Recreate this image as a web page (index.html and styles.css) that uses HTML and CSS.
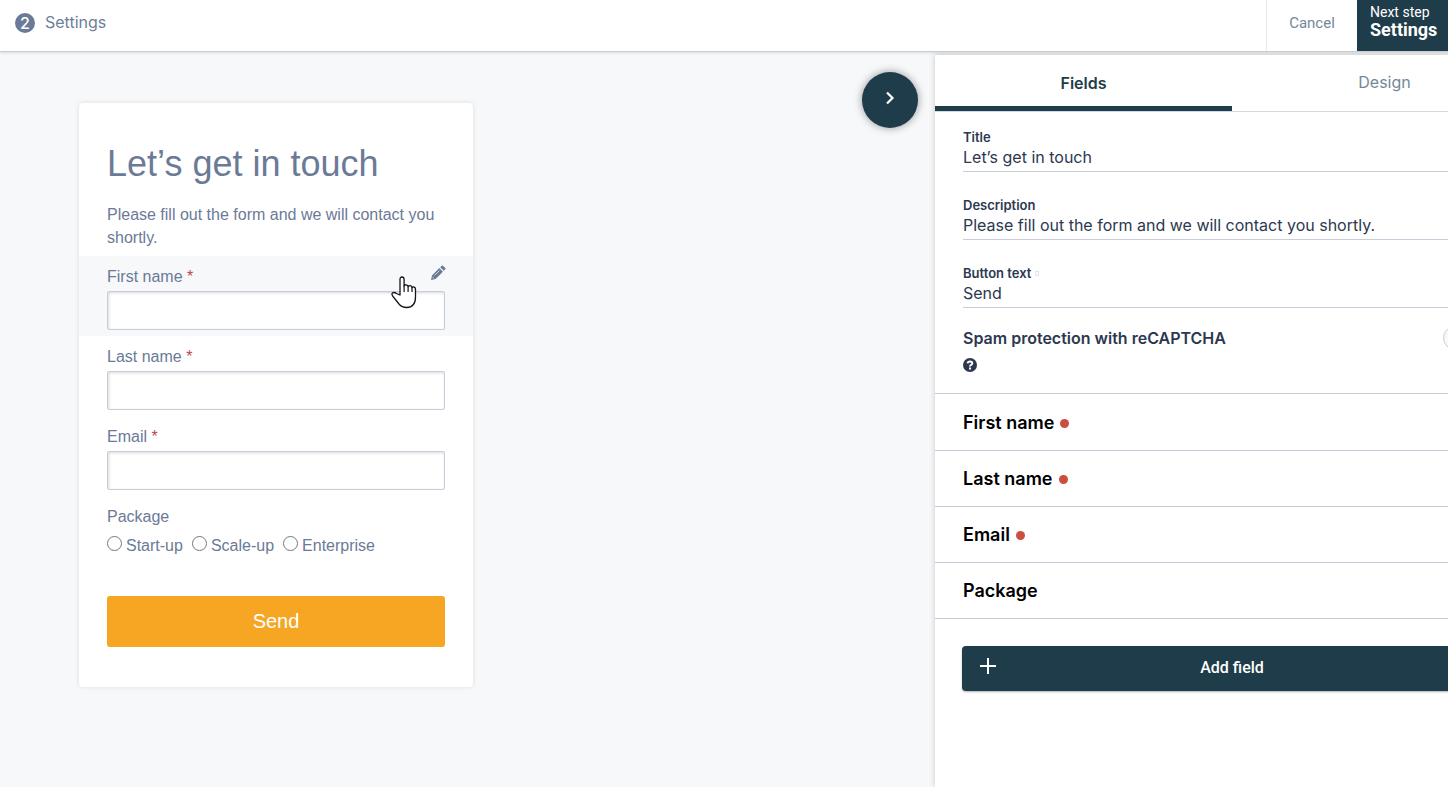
FILE: index.html
```
<!DOCTYPE html>
<html lang="en">
<head>
    <meta charset="UTF-8">
    <meta name="viewport" content="width=device-width, initial-scale=1.0">
    <title>Settings</title>
    <link rel="stylesheet" href="styles.css">
</head>
<body>
    <header class="topbar">
        <div class="step">
            <span class="step-number">2</span>
            <span class="step-name">Settings</span>
        </div>
        <button type="button" class="cancel">Cancel</button>
        <button type="button" class="next">
            <span>Next step</span>
            <strong>Settings</strong>
        </button>
    </header>

    <main class="editor">
        <!-- Form preview -->
        <section class="canvas">
            <form class="card">
                <h1>Let’s get in touch</h1>
                <p class="intro">Please fill out the form and we will contact you shortly.</p>
                <div class="field active">
                    <label for="first-name">First name <span class="star">*</span></label>
                    <input type="text" id="first-name">
                    <svg class="pencil" viewBox="0 0 16 16" width="16" height="16">
                        <path fill="#6b7a96" d="M1 15l1-4.600L9.300 3.100l3.600 3.600L5.600 14zM10.200 2.200l1.500-1.500q.6-.6 1.200 0l2.400 2.400q.6.600 0 1.200l-1.500 1.500z"/>
                        <path fill="none" stroke="#f7f8fa" stroke-width=".7" d="M4.500 10.500l5-5M2.600 12.100l1.300 1.300"/>
                    </svg>
                    <svg class="cursor" viewBox="0 0 26 33" width="26" height="33">
                        <path fill="#fff" stroke="#14141f" stroke-width="1.300" stroke-linejoin="round" d="M9 19V3.500Q9 1 11 1t2.100 2.500V10q.5-1.400 2-1.200 1.900.2 2 1.900.6-1.200 2-1 1.700.2 1.900 2 .6-1 1.900-.7 1.600.3 1.600 2.300V21q0 10.500-9 10.500-4.500 0-7.500-3.500l-6-7.500Q.2 18 1.500 16.900q1.700-1 4 .6z"/>
                        <path fill="none" stroke="#14141f" stroke-width="1.200" d="M13.100 9.500V16M17.100 10.500V16M21 11.500V16"/>
                    </svg>
                </div>
                <div class="field">
                    <label for="last-name">Last name <span class="star">*</span></label>
                    <input type="text" id="last-name">
                </div>
                <div class="field">
                    <label for="email">Email <span class="star">*</span></label>
                    <input type="email" id="email">
                </div>
                <fieldset class="package">
                    <legend>Package</legend>
                    <div class="options">
                        <label><input type="radio" name="package">Start-up</label>
                        <label><input type="radio" name="package">Scale-up</label>
                        <label><input type="radio" name="package">Enterprise</label>
                    </div>
                </fieldset>
                <button type="button" class="send">Send</button>
            </form>
            <button type="button" class="collapse" aria-label="Collapse panel">
                <svg viewBox="0 0 12 16" width="12" height="16">
                    <path fill="none" stroke="#fff" stroke-width="2.200" d="M3 2.500L8.500 8 3 13.500"/>
                </svg>
            </button>
        </section>

        <!-- Side panel, runs past the right edge of the window -->
        <aside class="panel">
            <nav class="tabs">
                <button type="button" class="tab current">Fields</button>
                <button type="button" class="tab">Design</button>
            </nav>
            <div class="settings">
                <div class="setting">
                    <label for="title">Title</label>
                    <input type="text" id="title" value="Let’s get in touch">
                </div>
                <div class="setting">
                    <label for="description">Description</label>
                    <input type="text" id="description" value="Please fill out the form and we will contact you shortly.">
                </div>
                <div class="setting">
                    <label for="button-text">Button text <span class="mark"></span></label>
                    <input type="text" id="button-text" value="Send">
                </div>
                <div class="spam">
                    <label for="captcha">Spam protection with reCAPTCHA</label>
                    <input type="checkbox" id="captcha" class="switch">
                </div>
                <svg class="help" viewBox="0 0 14 14" width="14" height="14">
                    <circle cx="7" cy="7" r="7" fill="#2c3850"/>
                    <path fill="none" stroke="#fff" stroke-width="1.900" d="M4.600 5.400Q4.800 3.500 7 3.500q2.300 0 2.300 1.700 0 1-1.200 1.600Q7 7.300 7 8.500"/>
                    <path fill="#fff" d="M6 9.400h2v2H6z"/>
                </svg>
            </div>
            <ul class="field-list">
                <li><button type="button">First name<span class="dot"></span></button></li>
                <li><button type="button">Last name<span class="dot"></span></button></li>
                <li><button type="button">Email<span class="dot"></span></button></li>
                <li><button type="button">Package</button></li>
            </ul>
            <button type="button" class="add">
                <svg viewBox="0 0 18 18" width="18" height="18">
                    <path fill="none" stroke="#fff" stroke-width="2" d="M9 1v16M1 9h16"/>
                </svg>
                <span>Add field</span>
            </button>
        </aside>
    </main>
</body>
</html>
```
FILE: styles.css
```
* {
    margin: 0;
    padding: 0;
    box-sizing: border-box;
}

body {
    display: flex;
    flex-direction: column;
    height: 100vh;
    overflow: hidden;
    color: #2c3850;
    font: 16px/24px Inter, sans-serif;
    background: #f7f8fa;
}

button {
    border: none;
    background: none;
    font: inherit;
    color: inherit;
    cursor: pointer;
}

/* Top bar */
.topbar {
    position: relative;
    z-index: 2;
    display: flex;
    flex: none;
    height: 52px;
    border-bottom: 1px solid #c8cdd3;
    background: #fff;
    box-shadow: 0 1px 3px rgba(0, 0, 0, 0.12);
}

.step {
    display: flex;
    flex: 1;
    align-items: center;
    gap: 10px;
    padding: 0 0 6px 15px;
    color: #6f8097;
}

.step-number {
    width: 20px;
    height: 20px;
    border-radius: 50%;
    background: #6b7a96;
    color: #fff;
    font-weight: 500;
    line-height: 20px;
    text-align: center;
}

.step-name {
    padding-bottom: 2px;
}

.cancel {
    width: 91px;
    padding-bottom: 6px;
    border-left: 1px solid #e4e7ee;
    color: #75869a;
    font-family: Roboto, sans-serif;
    font-size: 15px;
}

.next {
    display: flex;
    flex-direction: column;
    justify-content: center;
    width: 91px;
    padding: 0 0 10px 13px;
    background: #1e3c49;
    color: #fff;
    font: 14px/18px Roboto, sans-serif;
    text-align: left;
}

.next strong {
    font-size: 18px;
}

/* Layout */
.editor {
    display: flex;
    flex: 1;
    min-height: 0;
    overflow: hidden;
}

.canvas {
    display: flex;
    flex: 1;
    align-items: flex-start;
    justify-content: space-between;
    padding: 20px 17px 0 79px;
}

.collapse {
    display: flex;
    align-items: center;
    justify-content: center;
    width: 56px;
    height: 56px;
    padding-bottom: 4px;
    border-radius: 50%;
    background: #1e3c49;
    box-shadow: 0 0 8px rgba(0, 0, 0, 0.4);
}

/* Form preview */
.card {
    width: 394px;
    margin-top: 31px;
    padding: 40px 0;
    border-radius: 4px;
    background: #fff;
    box-shadow: 0 0 5px rgba(0, 0, 0, 0.1);
    color: #6b7a96;
    font: 16px/23px "Liberation Sans", Arial, sans-serif;
}

.card h1 {
    padding: 0 28px;
    font-size: 36px;
    font-weight: normal;
    line-height: 42px;
}

.intro {
    padding: 18px 28px 7px;
}

.field {
    position: relative;
    height: 80px;
    padding: 9px 28px 0;
}

.field.active {
    background: #f7f8fa;
}

.field label {
    display: block;
    margin-bottom: 3px;
}

.star {
    color: #b94a48;
}

.field input {
    display: block;
    width: 100%;
    height: 39px;
    padding: 0 8px;
    border: 1px solid #c8cddb;
    border-radius: 2px;
    background: #fff;
    box-shadow: inset 1px 1px 3px rgba(0, 0, 0, 0.15);
    font: inherit;
}

.pencil {
    position: absolute;
    top: 9px;
    right: 27px;
}

.cursor {
    position: absolute;
    top: 20px;
    right: 56px;
}

.package {
    padding: 0 28px;
    border: none;
}

.package legend {
    padding-top: 9px;
}

.options {
    display: flex;
    gap: 9px;
    padding-top: 6px;
}

.options label {
    display: flex;
    align-items: flex-start;
    gap: 4px;
}

.options input {
    width: 15px;
    height: 15px;
    margin-top: 2px;
}

.send {
    display: block;
    width: calc(100% - 56px);
    height: 51px;
    margin: 39px 28px 0;
    border-radius: 3px;
    background: #f6a623;
    color: #fff;
    font-size: 20px;
}

/* Side panel */
.panel {
    flex: none;
    width: 594px;
    margin: 3px -81px 0 0;
    background: #fff;
    box-shadow: 0 0 6px rgba(0, 0, 0, 0.2);
}

.tabs {
    display: flex;
    height: 57px;
    border-bottom: 1px solid #d5d8de;
}

.tab {
    width: 50%;
    padding: 0 0 2px 8px;
    color: #75869a;
}

.tab.current {
    padding: 4px 0 0;
    border-bottom: 5px solid #1e3c49;
    color: #1e3c49;
    font-weight: 600;
}

.settings {
    padding: 16px 28px 21px;
    border-bottom: 1px solid #c8cddb;
}

.setting {
    margin-bottom: 24px;
}

.setting label {
    display: block;
    font-size: 13px;
    font-weight: 600;
    line-height: 18px;
}

.setting input {
    display: block;
    width: 100%;
    height: 26px;
    padding-bottom: 3px;
    border: none;
    border-bottom: 1px solid #c8cddb;
    background: none;
    color: #2c3850;
    font: inherit;
}

.mark {
    display: inline-block;
    width: 4px;
    height: 5px;
    border: 1px solid #e4e4e4;
    vertical-align: 2px;
}

.spam {
    display: flex;
    align-items: center;
    justify-content: space-between;
    height: 24px;
    margin-top: -6px;
    font-weight: 600;
}

.switch {
    appearance: none;
    width: 58px;
    height: 24px;
    border: 1px solid #c8cddb;
    border-radius: 12px;
    background: #f7f8fa;
}

.help {
    display: block;
    margin-top: 8px;
}

.field-list {
    padding-top: 1px;
    list-style: none;
}

.field-list li {
    height: 56px;
    border-bottom: 1px solid #c8cddb;
}

.field-list button {
    display: flex;
    align-items: center;
    width: 100%;
    height: 100%;
    padding-left: 28px;
    color: #000;
    font-size: 18px;
    font-weight: 600;
}

.dot {
    width: 9px;
    height: 9px;
    margin: 2px 0 0 6px;
    border-radius: 50%;
    background: #c9503f;
}

.add {
    display: flex;
    align-items: center;
    width: 540px;
    height: 45px;
    margin: 27px 27px 0;
    padding: 0 35px 2px 17px;
    border-radius: 4px;
    background: #1e3c49;
    box-shadow: 0 1px 2px rgba(0, 0, 0, 0.3);
    color: #fff;
    font: 500 16px/24px Roboto, sans-serif;
}

.add svg {
    margin-bottom: 4px;
}

.add span {
    flex: 1;
}
```
